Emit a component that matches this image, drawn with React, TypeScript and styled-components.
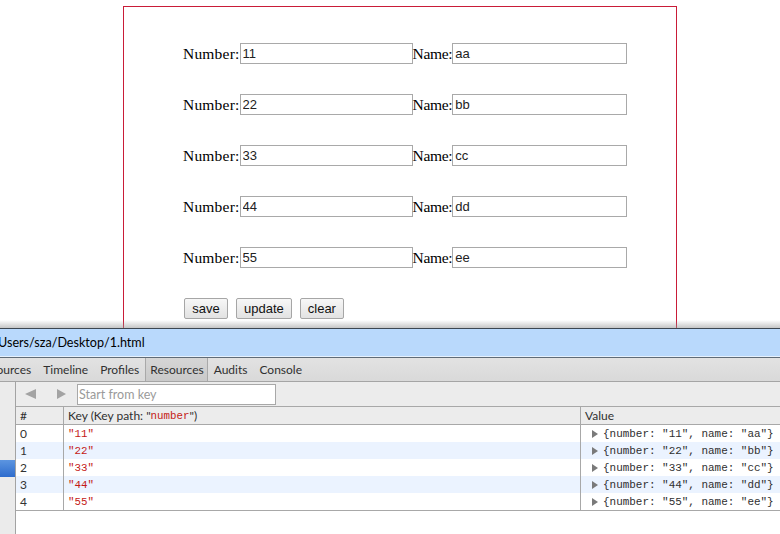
import React from "react";
import styled, { createGlobalStyle } from "styled-components";

const Global = createGlobalStyle`
  html, body { margin: 0; padding: 0; background: #ffffff; }
  body { width: 780px; height: 534px; overflow: hidden; }
  #root { width: 780px; height: 534px; }
`;

const Screen = styled.div`
  width: 780px;
  height: 534px;
  display: flex;
  flex-direction: column;
  overflow: hidden;
  background: #fff;
`;

const PageArea = styled.div`
  height: 328px;
  flex: none;
  overflow: hidden;
  padding: 6px 0 0 123px;
  box-sizing: border-box;
`;

const Box = styled.div`
  width: 554px;
  height: 400px;
  box-sizing: border-box;
  border: 1px solid #c91c38;
  padding: 36px 0 0 59px;
  display: flex;
  flex-direction: column;
  gap: 30px;
`;

const FormRow = styled.div`
  display: flex;
  align-items: center;
  height: 21px;
`;

const Label = styled.span<{ $ls: number }>`
  font-family: "Liberation Serif", serif;
  font-size: 15.5px;
  color: #000;
  letter-spacing: ${(p) => p.$ls}px;
`;

const TextInput = styled.input<{ $w: number }>`
  width: ${(p) => p.$w}px;
  height: 21px;
  box-sizing: border-box;
  border: 1px solid #a9a9a9;
  padding: 0 2px;
  margin: 0;
  font-family: "Liberation Sans", Arial, sans-serif;
  font-size: 13px;
  color: #222;
  background: #fff;
  outline: none;
`;

const ButtonRow = styled.div`
  display: flex;
  gap: 8px;
  padding-left: 1px;
`;

const Btn = styled.button`
  height: 21px;
  min-width: 44px;
  padding: 0 7px;
  margin: 0;
  box-sizing: border-box;
  border: 1px solid #a6a6a6;
  border-radius: 2px;
  background: linear-gradient(#f7f7f7, #e2e2e2);
  font-family: "Liberation Sans", Arial, sans-serif;
  font-size: 13px;
  color: #111;
`;

const DevTools = styled.div`
  position: relative;
  flex: 1;
  display: flex;
  flex-direction: column;
  border-top: 1px solid #3d4650;
  background: #fff;
  &::before {
    content: "";
    position: absolute;
    left: 0;
    right: 0;
    top: -9px;
    height: 8px;
    background: linear-gradient(rgba(150, 150, 150, 0), rgba(150, 150, 150, 0.55));
  }
`;

const TitleBar = styled.div`
  height: 27px;
  background: #b9d9fc;
  border-bottom: 1px solid #e6f1fd;
  box-shadow: 0 1px 0 #5f6b76;
  display: flex;
  align-items: center;
  font-family: Lato, "Open Sans", sans-serif;
  font-size: 12.6px;
  color: #000;
  margin-bottom: 1px;
  overflow: hidden;
`;

const TitleText = styled.span`
  margin-left: -2px;
  white-space: nowrap;
`;

const TabBar = styled.div`
  height: 23px;
  background: linear-gradient(#e2e2e2, #d9d9d9);
  border-bottom: 1px solid #a5a5a5;
  display: flex;
  align-items: stretch;
  font-family: Lato, "Open Sans", sans-serif;
  font-size: 12px;
  color: #303030;
  overflow: hidden;
`;

const Tab = styled.div<{ $active?: boolean; $first?: boolean }>`
  display: flex;
  align-items: center;
  flex: none;
  padding: ${(p) => (p.$active ? "0 3px 0 4px" : "0 6px")};
  margin-left: ${(p) => (p.$first ? "-16px" : "0")};
  background: ${(p) => (p.$active ? "linear-gradient(#d6d6d6, #c9c9c9)" : "transparent")};
  border-left: ${(p) => (p.$active ? "1px solid #a9a9a9" : "none")};
  border-right: ${(p) => (p.$active ? "1px solid #a9a9a9" : "none")};
`;

const Body = styled.div`
  flex: 1;
  display: flex;
`;

const Sidebar = styled.div`
  width: 15px;
  flex: none;
  background: #ebebeb;
  border-right: 1px solid #a3a3a3;
  padding-top: 78px;
  box-sizing: content-box;
`;

const SideSelected = styled.div`
  height: 17px;
  background: linear-gradient(#5c95e0, #2e6ccd);
`;

const Main = styled.div`
  flex: 1;
  display: flex;
  flex-direction: column;
`;

const Toolbar = styled.div`
  height: 24px;
  background: #ececec;
  display: flex;
  align-items: center;
  padding-left: 9px;
`;

const NavIcon = styled.svg<{ $ml: number }>`
  margin-left: ${(p) => p.$ml}px;
  flex: none;
`;

const KeyInput = styled.div`
  margin-left: 11px;
  width: 199px;
  height: 21px;
  box-sizing: border-box;
  border: 1px solid #a8a8a8;
  background: #fff;
  display: flex;
  align-items: center;
  padding-left: 1px;
  font-family: Lato, "Open Sans", sans-serif;
  font-size: 12.5px;
  color: #9a9a9a;
`;

const Table = styled.div`
  border-top: 1px solid #a8a8a8;
  border-bottom: 1px solid #a8a8a8;
  display: grid;
  grid-template-columns: 48px 517px 1fr;
`;

const HeadCell = styled.div<{ $last?: boolean }>`
  height: 17px;
  background: #ececec;
  border-bottom: 1px solid #a8a8a8;
  border-right: ${(p) => (p.$last ? "none" : "1px solid #a8a8a8")};
  display: flex;
  align-items: center;
  padding-left: 4px;
  font-family: Lato, "Open Sans", sans-serif;
  font-size: 12px;
  color: #303030;
  white-space: nowrap;
`;

const Cell = styled.div<{ $alt: boolean; $last?: boolean }>`
  height: 17px;
  background: ${(p) => (p.$alt ? "#ebf3ff" : "#ffffff")};
  border-right: ${(p) => (p.$last ? "none" : "1px solid #a8a8a8")};
  display: flex;
  align-items: center;
  padding-left: 4px;
  white-space: nowrap;
  overflow: hidden;
`;

const IndexText = styled.span`
  font-family: Lato, "Open Sans", sans-serif;
  font-size: 12px;
  color: #333;
`;

const Str = styled.span`
  font-family: "Liberation Mono", monospace;
  font-size: 10.8px;
  color: #c41a16;
`;

const Obj = styled.span`
  font-family: "Liberation Mono", monospace;
  font-size: 10.95px;
  color: #303030;
  margin-left: 5px;
`;

const Tri = styled.svg`
  margin-left: 7px;
  flex: none;
`;

const HeadText = styled.span`
  font-family: Lato, "Open Sans", sans-serif;
`;

const rows = [
  ["11", "aa"],
  ["22", "bb"],
  ["33", "cc"],
  ["44", "dd"],
  ["55", "ee"],
];

export default function App() {
  return (
    <Screen>
      <Global />
      <PageArea>
        <Box>
          {rows.map(([n, name]) => (
            <FormRow key={n}>
              <Label $ls={0.2}>Number:</Label>
              <TextInput $w={173} defaultValue={n} />
              <Label $ls={-0.3}>Name:</Label>
              <TextInput $w={175} defaultValue={name} />
            </FormRow>
          ))}
          <ButtonRow>
            <Btn>save</Btn>
            <Btn>update</Btn>
            <Btn>clear</Btn>
          </ButtonRow>
        </Box>
      </PageArea>
      <DevTools>
        <TitleBar>
          <TitleText>Users/sza/Desktop/1.html</TitleText>
        </TitleBar>
        <TabBar>
          <Tab $first>Sources</Tab>
          <Tab>Timeline</Tab>
          <Tab>Profiles</Tab>
          <Tab $active>Resources</Tab>
          <Tab>Audits</Tab>
          <Tab>Console</Tab>
        </TabBar>
        <Body>
          <Sidebar>
            <SideSelected />
          </Sidebar>
          <Main>
            <Toolbar>
              <NavIcon $ml={0} width="11" height="10" viewBox="0 0 11 10">
                <path d="M0 5 L11 0 L11 10 Z" fill="#a3a3a3" />
              </NavIcon>
              <NavIcon $ml={21} width="9" height="10" viewBox="0 0 9 10">
                <path d="M9 5 L0 0 L0 10 Z" fill="#a3a3a3" />
              </NavIcon>
              <KeyInput>Start from key</KeyInput>
            </Toolbar>
            <Table>
              <HeadCell>#</HeadCell>
              <HeadCell>
                <HeadText>Key (Key path: "</HeadText>
                <Str>number</Str>
                <HeadText>")</HeadText>
              </HeadCell>
              <HeadCell $last>Value</HeadCell>
              {rows.map(([n, name], i) => (
                <React.Fragment key={n}>
                  <Cell $alt={i % 2 === 1}>
                    <IndexText>{i}</IndexText>
                  </Cell>
                  <Cell $alt={i % 2 === 1}>
                    <Str>"{n}"</Str>
                  </Cell>
                  <Cell $alt={i % 2 === 1} $last>
                    <Tri width="6" height="8" viewBox="0 0 6 8">
                      <path d="M0 0 L6 4 L0 8 Z" fill="#7a7a7a" />
                    </Tri>
                    <Obj>{`{number: "${n}", name: "${name}"}`}</Obj>
                  </Cell>
                </React.Fragment>
              ))}
            </Table>
          </Main>
        </Body>
      </DevTools>
    </Screen>
  );
}
